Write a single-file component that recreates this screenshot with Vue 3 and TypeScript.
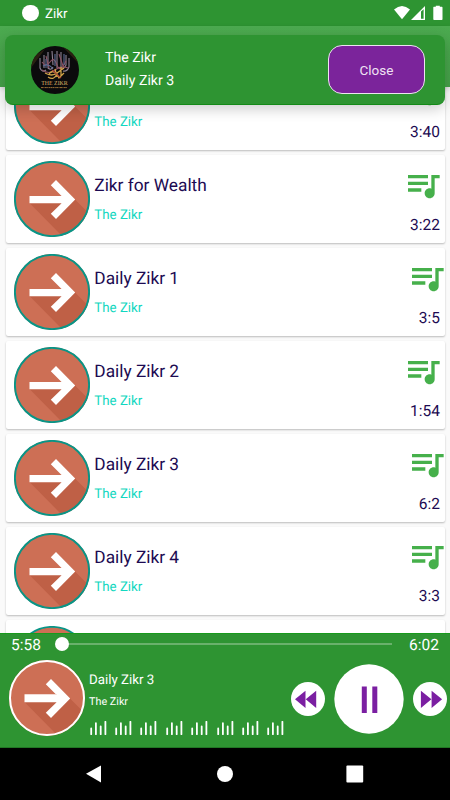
<script setup lang="ts">
interface Track {
  title: string
  time: string
  shift?: boolean
}

const tracks: Track[] = [
  { title: '', time: '3:40' },
  { title: 'Zikr for Wealth', time: '3:22' },
  { title: 'Daily Zikr 1', time: '3:5', shift: true },
  { title: 'Daily Zikr 2', time: '1:54' },
  { title: 'Daily Zikr 3', time: '6:2', shift: true },
  { title: 'Daily Zikr 4', time: '3:3', shift: true },
]
</script>

<template>
  <div class="screen">
    <header class="status">
      <span class="dot"></span>
      <span class="status-name">Zikr</span>
      <svg class="status-icons" width="52" height="16" viewBox="0 0 52 16">
        <path d="M1 4.400Q9 -2.600 17 4.400L9 14.200Z" fill="#fff" />
        <path d="M32 1V15H18Z" fill="#fff" />
        <path d="M28 6.500L30.600 4.200V13.800H28Z" fill="#2e9432" />
        <path d="M40.800 1.700h2V.7h4v1h2q.7 0 .7.8v11.700q0 .8-.8.8h-7.600q-.8 0-.8-.8V2.500q0-.8.500-.8Z" fill="#fff" />
      </svg>
    </header>
    <div class="appbar"></div>

    <section class="toast">
      <svg class="cover" width="48" height="48" viewBox="0 0 48 48">
        <defs><clipPath id="coverClip"><circle cx="24" cy="24" r="24" /></clipPath></defs>
        <g clip-path="url(#coverClip)">
          <rect width="48" height="48" fill="#0b0a0c" />
          <path d="M31 0L48 18V5L36 0ZM0 12L14 3L0 22Z" fill="#2a2111" />
          <g fill="none" stroke-width="1.100">
            <path d="M9 12v10q2 5 6 2M13 9v13M17 6v16q3 3 5-1M21 5l1 14M26 5v17M30 6v15q3 3 5-2V9M38 12v9q-2 5-6 4" stroke="#8d8394" />
            <path d="M11 16q4 6 8 0t7 3 9-4M11 24q7 5 13 0t13-2M15 10l3 12M28 8l4 12" stroke="#8b5262" />
            <path d="M15 13v9M24 8v12M33 8v11M12 20q6-3 10 3" stroke="#5d6d96" />
            <path d="M14 27q7 4 12 0l7-5M17 31q6 4 9-3l2 4 5-5M24 23l2 8M30 21v9M18 28q3-4 6-1" stroke="#d2a448" stroke-width="1.300" />
            <path d="M21 24l9 8" stroke="#a74435" />
          </g>
          <text x="23.500" y="38.800" class="cover-title" text-anchor="middle" textLength="26.500" lengthAdjust="spacingAndGlyphs">THE ZIKR</text>
          <path d="M10 41.600H36" stroke="#997036" stroke-width="1" stroke-dasharray="2 .4 1 .4" />
        </g>
      </svg>
      <div class="toast-text">
        <span>The Zikr</span>
        <span>Daily Zikr 3</span>
      </div>
      <button class="close">Close</button>
    </section>

    <main class="list">
      <article v-for="t in tracks" :key="t.title" class="card">
        <svg class="art" viewBox="0 0 76 76">
          <circle cx="38" cy="38" r="38" fill="#cd6f55" />
          <path d="M15.500 42L47.500 74.500A38 38 0 0 0 73.500 51L61 38.500Z" fill="#bf6046" />
          <path class="arrow" d="M15.500 35H47.600L36.800 24.300L42 19L61.200 38.500L42 57.900L36.800 52.700L47.600 42.200H15.500Z" />
          <circle cx="38" cy="38" r="37.100" fill="none" stroke="#089587" stroke-width="1.900" />
        </svg>
        <div class="names">
          <h2>{{ t.title }}</h2>
          <p>The Zikr</p>
        </div>
        <div class="side">
          <svg class="queue" :class="{ shift: t.shift }" width="40" height="40" viewBox="0 0 24 24">
            <path d="M15 6H3v2h12V6zm0 4H3v2h12v-2zM3 16h8v-2H3v2zM17 6v8.180c-.31-.11-.65-.18-1-.18-1.660 0-3 1.340-3 3s1.340 3 3 3 3-1.340 3-3V8h3V6h-5z" />
          </svg>
          <span class="time">{{ t.time }}</span>
        </div>
      </article>
      <article class="card">
        <svg class="art" viewBox="0 0 76 76">
          <circle cx="38" cy="38" r="37.100" fill="#cd6f55" stroke="#089587" stroke-width="1.900" />
        </svg>
      </article>
    </main>

    <footer class="player">
      <div class="progress">
        <span class="elapsed">5:58</span>
        <div class="track"><span class="thumb"></span></div>
        <span class="total">6:02</span>
      </div>
      <div class="controls">
        <svg class="art now" viewBox="0 0 76 76">
          <circle cx="38" cy="38" r="38" fill="#cd6f55" />
          <path d="M15.500 42L47.500 74.500A38 38 0 0 0 73.500 51L61 38.500Z" fill="#bf6046" />
          <path class="arrow" d="M15.500 35H47.600L36.800 24.300L42 19L61.200 38.500L42 57.900L36.800 52.700L47.600 42.200H15.500Z" />
          <path d="M15.500 34.500H47" stroke="#f3d9d2" stroke-width="1" />
          <circle cx="38" cy="38" r="37" fill="none" stroke="#fff" stroke-width="2" />
        </svg>
        <div class="now-info">
          <span class="now-title">Daily Zikr 3</span>
          <span class="now-artist">The Zikr</span>
          <div class="bars">
            <svg v-for="n in 8" :key="n" width="17" height="14" viewBox="0 0 17 14">
              <path d="M1.200 7.500V13.200M5.900 2.200V13.200M10.700 5.500V13.200M15.400 .8V13.200" />
            </svg>
          </div>
        </div>
        <div class="buttons">
          <svg width="34" height="34" viewBox="0 0 34 34">
            <circle cx="17" cy="17" r="17" fill="#fff" />
            <path d="M4 17.300L14.500 8.700V26ZM14.700 17.300L25.200 8.700V26Z" fill="#7b1fa2" />
          </svg>
          <svg width="70" height="70" viewBox="0 0 70 70">
            <circle cx="35" cy="35" r="34.700" fill="#fff" />
            <path d="M27.800 22.500h5v26.500h-5zM38.300 22.500h5v26.500h-5z" fill="#7b1fa2" />
          </svg>
          <svg width="34" height="34" viewBox="0 0 34 34">
            <circle cx="17" cy="17" r="17" fill="#fff" />
            <path d="M7.900 8.700L18.400 17.300L7.900 26ZM18.600 8.700L29.100 17.300L18.600 26Z" fill="#7b1fa2" />
          </svg>
        </div>
      </div>
    </footer>

    <nav class="navbar">
      <svg width="18" height="18" viewBox="0 0 18 18"><path d="M0 8.800L15 .5V17.500Z" transform="translate(-1 0)" /></svg>
      <svg width="18" height="18" viewBox="0 0 18 18"><circle cx="9" cy="9" r="8" /></svg>
      <svg width="18" height="18" viewBox="0 0 18 18"><rect x=".4" y=".6" width="16.800" height="16.800" rx="1" /></svg>
    </nav>
  </div>
</template>

<style>
body {
  margin: 0;
}
</style>

<style scoped>
.screen {
  position: relative;
  display: flex;
  flex-direction: column;
  width: 450px;
  height: 800px;
  overflow: hidden;
  background: #fafafa;
  font-family: Roboto, sans-serif;
  text-rendering: geometricPrecision;
}
.status {
  flex: none;
  display: flex;
  align-items: center;
  height: 26px;
  padding: 0 8px 0 22px;
  box-sizing: border-box;
  background: #2e9432;
  color: #fff;
}
.dot {
  width: 16.500px;
  height: 16.500px;
  border-radius: 50%;
  background: #fff;
}
.status-name {
  margin-left: 6.500px;
  padding-top: 2px;
  font-size: 13.300px;
}
.status-icons {
  margin-left: auto;
  margin-right: -3px;
}
.appbar {
  flex: none;
  position: relative;
  z-index: 2;
  height: 61px;
  background: linear-gradient(#4caa50, #45a149);
  box-shadow: 0 2px 5px rgba(0, 0, 0, .16);
}
.toast {
  position: absolute;
  z-index: 3;
  left: 5px;
  top: 35px;
  width: 440px;
  height: 70px;
  box-sizing: border-box;
  display: flex;
  align-items: center;
  padding: 0 20px 0 26px;
  border-radius: 8px;
  background: #2e9432;
  border-bottom: 1px solid #138a17;
  box-shadow: 0 4px 14px rgba(0, 0, 0, .2);
  color: #fff;
}
.cover-title {
  font: 6.300px "Liberation Serif", serif;
  fill: #dfb465;
}
.toast-text {
  display: flex;
  flex-direction: column;
  gap: 3px;
  margin: -1px 0 0 26px;
  font-size: 14.100px;
  line-height: 20px;
}
.close {
  width: 97px;
  height: 49px;
  margin-left: auto;
  padding: 0;
  border: 1.500px solid #eee3f1;
  border-radius: 14px;
  background: #7b249b;
  color: #efe2f3;
  font: 13.500px Roboto, sans-serif;
}
.list {
  flex: 1;
  min-height: 0;
  margin-top: -24.600px;
  display: flex;
  flex-direction: column;
  gap: 5px;
  padding: 0 5px;
  overflow: hidden;
}
.card {
  flex: none;
  display: flex;
  height: 87.900px;
  margin-left: .5px;
  box-sizing: border-box;
  padding: 0 5px 0 8.500px;
  border-radius: 2px;
  background: #fff;
  box-shadow: 0 1px 2px rgba(0, 0, 0, .25);
}
.art {
  flex: none;
  width: 76px;
  height: 76px;
  margin-top: 5.800px;
}
.arrow {
  fill: #fff;
}
.names {
  margin-left: 4.300px;
}
.names h2 {
  height: 22px;
  margin: 20px 0 0;
  font-size: 17.300px;
  font-weight: 400;
  line-height: 22px;
  color: #1d0b52;
}
.names p {
  margin: 10px 0 0;
  font-size: 13.300px;
  line-height: 18px;
  color: #12d7c0;
}
.side {
  display: flex;
  flex-direction: column;
  align-items: flex-end;
  margin-left: auto;
}
.queue {
  margin: 9.600px -2.800px 0 0;
  fill: #46b04b;
}
.queue.shift {
  margin-right: -6.800px;
}
.time {
  margin-top: 10px;
  font-size: 15.500px;
  line-height: 20px;
  color: #1d0b52;
}
.player {
  flex: none;
  position: relative;
  z-index: 2;
  height: 115px;
  box-sizing: border-box;
  border-top: 1px solid #189a1c;
  border-bottom: 1px solid #217624;
  background: #2e9432;
  color: #fff;
}
.progress {
  display: flex;
  align-items: center;
  height: 22px;
  padding: 0 11px;
  font-size: 15.500px;
}
.progress > span {
  margin-top: -1px;
}
.track {
  display: flex;
  align-items: center;
  width: 336px;
  height: 2px;
  margin: -3px auto 0 15px;
  background: #69b16b;
}
.thumb {
  width: 14px;
  height: 14px;
  margin-left: -1px;
  border-radius: 50%;
  background: #fff;
}
.controls {
  display: flex;
  padding-left: 8.500px;
}
.now {
  margin-top: 4px;
}
.now-info {
  display: flex;
  flex-direction: column;
  margin-left: 4.500px;
}
.now-title {
  margin-top: 16px;
  font-size: 13.300px;
  line-height: 18px;
}
.now-artist {
  margin-top: 5px;
  font-size: 10.800px;
  line-height: 14px;
}
.bars {
  display: flex;
  gap: 8.400px;
  margin: 12px 0 0 .7px;
}
.bars path {
  fill: none;
  stroke: #fff;
  stroke-width: 1.800;
  stroke-linecap: round;
}
.buttons {
  display: flex;
  align-items: center;
  gap: 9px;
  height: 70px;
  margin: 8px 0 0 6.800px;
}
.navbar {
  flex: none;
  display: flex;
  justify-content: center;
  gap: 111.500px;
  height: 52px;
  padding-top: 17px;
  box-sizing: border-box;
  background: #000;
  fill: #fff;
}
.navbar svg {
  overflow: visible;
}
</style>
